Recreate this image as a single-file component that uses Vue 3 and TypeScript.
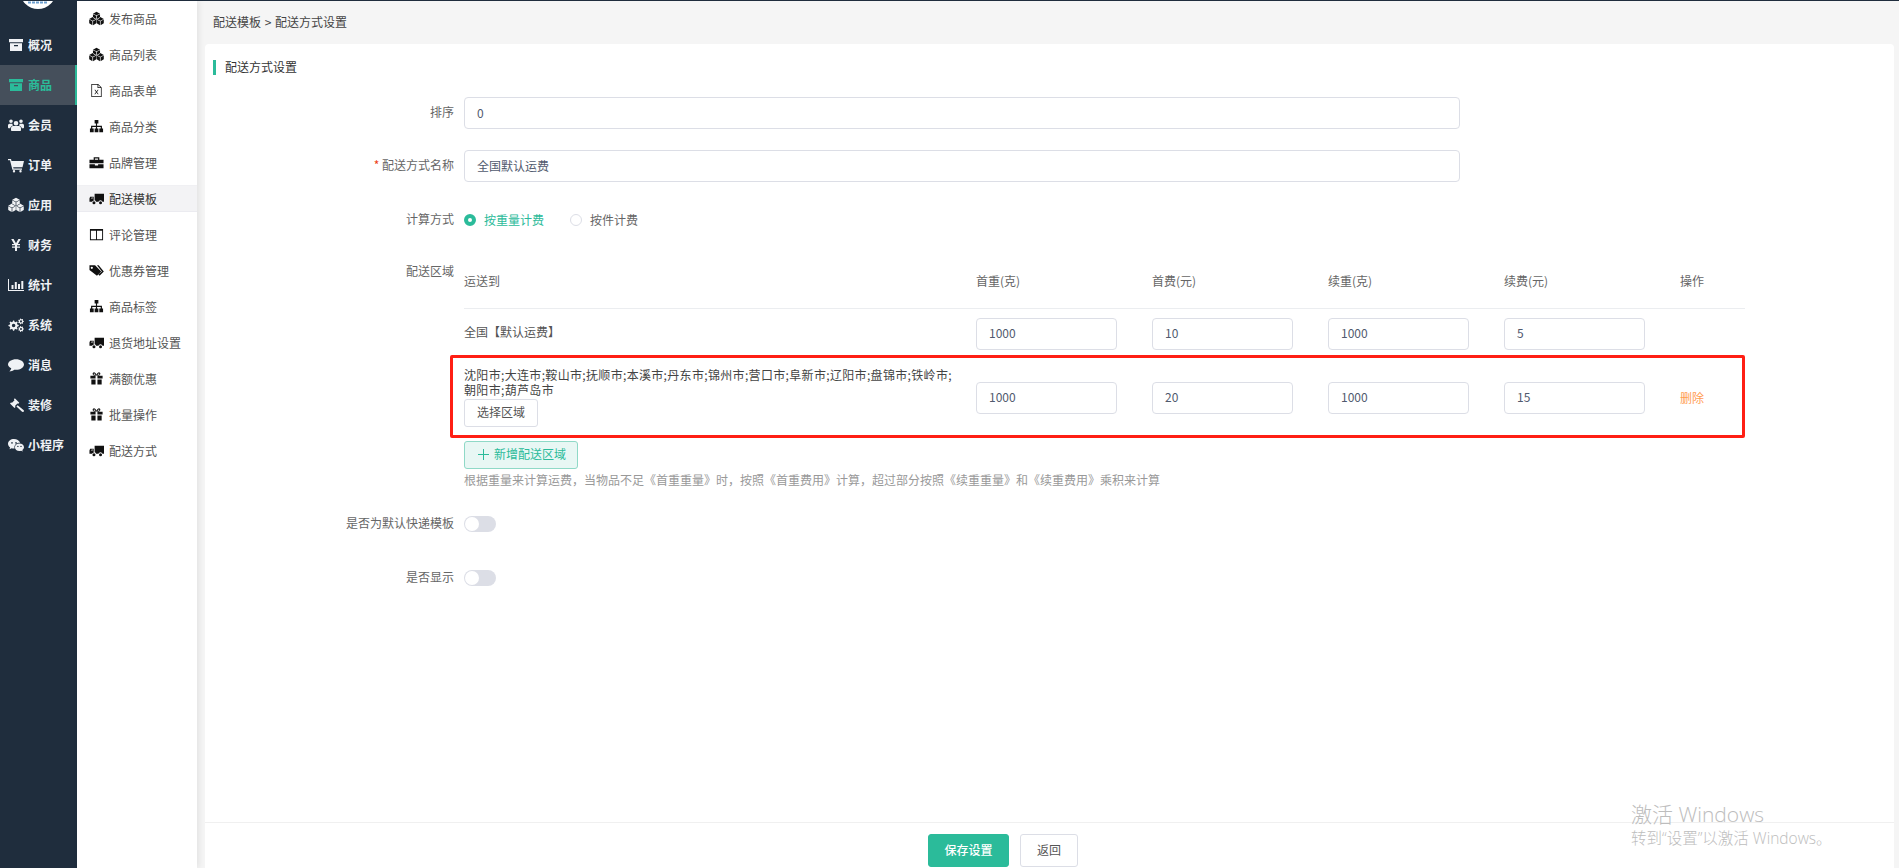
<script setup lang="ts">
function n(v: number): string {
  return (Math.round(v * 100) / 100).toString()
}
function cube(cx: number, cy: number, r: number): string {
  const w = r * 0.88
  const h = r * 0.5
  const g = 0.35
  const top = `M${n(cx)} ${n(cy - r)}L${n(cx + w)} ${n(cy - h)}L${n(cx)} ${n(cy - g)}L${n(cx - w)} ${n(cy - h)}Z`
  const left = `M${n(cx - w)} ${n(cy - h + g * 1.4)}L${n(cx - g)} ${n(cy + g / 2)}L${n(cx - g)} ${n(cy + r)}L${n(cx - w)} ${n(cy + h)}Z`
  const right = `M${n(cx + w)} ${n(cy - h + g * 1.4)}L${n(cx + g)} ${n(cy + g / 2)}L${n(cx + g)} ${n(cy + r)}L${n(cx + w)} ${n(cy + h)}Z`
  return top + left + right
}
function gear(cx: number, cy: number, r: number, teeth: number): string {
  const pts: string[] = []
  const steps = teeth * 4
  for (let i = 0; i < steps; i++) {
    const a = ((i - 0.5) / steps) * Math.PI * 2
    const rad = i % 4 < 2 ? r : r * 0.74
    pts.push(`${n(cx + Math.cos(a) * rad)} ${n(cy + Math.sin(a) * rad)}`)
  }
  const hole = r * 0.34
  return `M${pts.join('L')}ZM${n(cx - hole)} ${n(cy)}a${n(hole)} ${n(hole)} 0 1 0 ${n(hole * 2)} 0a${n(hole)} ${n(hole)} 0 1 0 ${n(-hole * 2)} 0Z`
}

const icons: Record<string, string> = {
  archive: 'M1 2h14v3.200H1zM2 6.200h12V14H2zM6 8v1.200h4V8z',
  users:
    'M8 4a2.300 2.300 0 1 1 0 4.600A2.300 2.300 0 0 1 8 4zM3 2.500a1.800 1.800 0 1 1 0 3.600 1.800 1.800 0 0 1 0-3.600zM13 2.500a1.800 1.800 0 1 1 0 3.600 1.800 1.800 0 0 1 0-3.600zM5 9h6c1.200 0 2 1 2 2.500V13c0 .6-.5 1-1 1H4c-.5 0-1-.4-1-1v-1.500C3 10 3.800 9 5 9zM1.500 6.800H4.300c.1.700.4 1.300.8 1.600-1.500.3-2.700 1.300-2.900 2.900H1c-.6 0-1-.4-1-1V8.500c0-1 .7-1.700 1.500-1.700zM11.700 6.800h2.800c.8 0 1.500.7 1.500 1.700V10.300c0 .6-.4 1-1 1h-1.200c-.2-1.600-1.400-2.600-2.900-2.900.4-.3.700-.9.800-1.600z',
  cart:
    'M0 2h3l.5 2H16l-1.500 6.200H5.200l.3 1.300H14v1.300H4.400L2 3.300H0zM6 13a1.200 1.200 0 1 1 0 2.400A1.200 1.200 0 0 1 6 13zM12.500 13a1.200 1.200 0 1 1 0 2.400 1.200 1.200 0 0 1 0-2.400z',
  cubes: cube(8, 5, 4.3) + cube(4, 10.8, 4.3) + cube(12, 10.8, 4.3),
  yen: 'M3.200 2h2.400L8 6.300 10.400 2h2.400L9.900 7H12v1.300H9V9.500h3v1.300H9V14H7v-3.200H4V9.500h3V8.300H4V7h2.100z',
  chart: 'M0 2h1v11h15v1H0zM3.500 8h2v4h-2zM6.800 5h2v7h-2zM10 7h2v5h-2zM13.300 4h2v8h-2z',
  cogs: gear(5.6, 8.6, 5.2, 8) + gear(13, 4.4, 2.9, 7) + gear(13, 12, 2.9, 7),
  comment:
    'M8 2.200c4.400 0 8 2.400 8 5.300s-3.600 5.300-8 5.300c-.6 0-1.200 0-1.800-.1C5 13.700 3.200 14.300 1.400 14.400c.9-1 1.600-2 1.900-3.200C1.300 10.300 0 9 0 7.500 0 4.600 3.600 2.200 8 2.200z',
  gavel:
    'M6.800 1.200l4.500 4.500-1 1-.9-.2L7 8.900l.5 1-1 1L2 6.400l1-1 1 .4 2.500-2.500-.6-.8zM8.400 9.500l1.200-1.200 5.900 4.600c.6.500.6 1.300.1 1.800s-1.300.5-1.800-.1z',
  wechat:
    'M6 2C2.700 2 0 4.100 0 6.800c0 1.500.8 2.800 2.100 3.700l-.6 1.800 2.100-1.100c.8.200 1.500.3 2.400.3h.6c-.1-.4-.2-.8-.2-1.200 0-2.500 2.400-4.500 5.300-4.500h.5C11.200 3.500 8.800 2 6 2zM4 5.100a.8.800 0 1 1 0 1.600.8.800 0 0 1 0-1.600zM8 5.100a.8.800 0 1 1 0 1.600.8.800 0 0 1 0-1.600zM11.400 6.500C8.900 6.500 6.900 8.100 6.900 10.200s2 3.700 4.500 3.700c.6 0 1.100-.1 1.700-.2l1.700.9-.5-1.500c1-.7 1.700-1.800 1.700-2.900 0-2.100-2-3.700-4.600-3.700zM9.900 8.700a.7.700 0 1 1 0 1.400.7.700 0 0 1 0-1.400zM13 8.700a.7.700 0 1 1 0 1.400.7.700 0 0 1 0-1.400z',
  file:
    'M2.500 1h7.300l3.700 3.700V15h-11zM3.300 1.800v12.400h9.400V5.400H9.100V1.800zM9.900 2.200V4.600h2.400zM5.800 7.200h.9l1.300 1.800 1.300-1.800h.9L8.500 9.600l1.800 2.400h-.9L8 10.200 6.600 12h-.9l1.800-2.400z',
  sitemap:
    'M6 1h4v3.800H8.600v2.400h5.200V10H15v4h-4v-4h1.500V8.400H8.600V10H10v4H6v-4h1.400V8.400H3.500V10H5v4H1v-4h1.200V7.200h5.200V4.800H6z',
  briefcase:
    'M5 2.500h6V5h4.500v3.800h-15V5H5zM6.300 3.700V5h3.400V3.700zM.5 9.800h5.800v1.500h3.400V9.800h5.800V14H.5z',
  truck:
    'M6 3h10v8.500h-1.600a2.200 2.200 0 0 0-4.300 0H7.500a2.200 2.200 0 0 0-1.500-1.700zM1.200 6H5v4.500c-.8.100-1.500.5-1.800 1H.5V8zM2 7.900h2V6.900H3zM5.300 10.800a1.600 1.600 0 1 1 0 3.200 1.600 1.600 0 0 1 0-3.200zM12.300 10.800a1.600 1.600 0 1 1 0 3.200 1.600 1.600 0 0 1 0-3.200z',
  columns: 'M1 2h14v12H1zM2 4v9h5.500V4zM8.500 4v9H14V4z',
  tags:
    'M.5 2.500H6.500l6.500 6.500-4.500 4.500L.5 7.500zM3 3.900a1.200 1.200 0 1 0 0 2.400 1.200 1.200 0 0 0 0-2.400zM8.500 2.500h1.800l5.500 6.500-4.500 4.500-1.300-1.200L13.700 9z',
  gift:
    'M1.500 5H7v3H1.500zM9 5h5.500v3H9zM2.500 9H7v5.500H2.500zM9 9h4.500v5.500H9zM4.800 1.500c1.300-.4 2.500.8 3.200 2.600.7-1.800 1.900-3 3.200-2.600 1.500.5 1.100 2.800-.6 3.200H5.400C3.700 4.300 3.300 2 4.800 1.500zM5.200 2.800c-.5.200-.3 1 .3 1.200h1.400c-.5-.9-1.100-1.400-1.700-1.200zM10.800 2.800c-.6-.2-1.200.3-1.700 1.200h1.400c.6-.2.800-1 .3-1.200z',
}

const mainMenu = [
  { label: '概况', icon: 'archive' },
  { label: '商品', icon: 'archive', active: true },
  { label: '会员', icon: 'users' },
  { label: '订单', icon: 'cart' },
  { label: '应用', icon: 'cubes' },
  { label: '财务', icon: 'yen' },
  { label: '统计', icon: 'chart' },
  { label: '系统', icon: 'cogs' },
  { label: '消息', icon: 'comment' },
  { label: '装修', icon: 'gavel' },
  { label: '小程序', icon: 'wechat' },
]

const subMenu = [
  { label: '发布商品', icon: 'cubes' },
  { label: '商品列表', icon: 'cubes' },
  { label: '商品表单', icon: 'file' },
  { label: '商品分类', icon: 'sitemap' },
  { label: '品牌管理', icon: 'briefcase' },
  { label: '配送模板', icon: 'truck', active: true },
  { label: '评论管理', icon: 'columns' },
  { label: '优惠券管理', icon: 'tags' },
  { label: '商品标签', icon: 'sitemap' },
  { label: '退货地址设置', icon: 'truck' },
  { label: '满额优惠', icon: 'gift' },
  { label: '批量操作', icon: 'gift' },
  { label: '配送方式', icon: 'truck' },
]

const columns = ['首重(克)', '首费(元)', '续重(克)', '续费(元)']
const cities =
  '沈阳市;大连市;鞍山市;抚顺市;本溪市;丹东市;锦州市;营口市;阜新市;辽阳市;盘锦市;铁岭市;朝阳市;葫芦岛市'
</script>

<template>
  <div class="page">
    <div class="topline"></div>
    <div class="shell">
      <aside class="side">
        <svg class="logo" viewBox="0 0 36 36">
          <circle cx="18" cy="18" r="18" fill="#fff" />
          <path d="M8 29.500h20" stroke="#6d9fd0" stroke-width="2" stroke-dasharray="3 1" />
        </svg>
        <div
          v-for="item in mainMenu"
          :key="item.label"
          class="side-item"
          :class="{ on: item.active }"
        >
          <span class="side-ic"><svg viewBox="0 0 16 16"><path :d="icons[item.icon]" fill-rule="evenodd" /></svg></span>
          <span class="side-txt">{{ item.label }}</span>
        </div>
      </aside>

      <nav class="sub">
        <div v-for="item in subMenu" :key="item.label" class="sub-item" :class="{ on: item.active }">
          <svg viewBox="0 0 16 16"><path :d="icons[item.icon]" fill-rule="evenodd" /></svg>
          <span>{{ item.label }}</span>
        </div>
      </nav>

      <main class="main">
        <div class="crumb">配送模板 &gt; 配送方式设置</div>
        <section class="card">
          <div class="body">
            <h2 class="title">配送方式设置</h2>

            <div class="row first">
              <label class="lab">排序</label>
              <div class="ctl"><input class="inp wide" value="0" /></div>
            </div>
            <div class="row r2">
              <label class="lab"><i>*</i> 配送方式名称</label>
              <div class="ctl"><input class="inp wide" value="全国默认运费" /></div>
            </div>
            <div class="row r3">
              <label class="lab">计算方式</label>
              <div class="ctl radios">
                <span class="radio sel"><b></b><em>按重量计费</em></span>
                <span class="radio"><b></b><em>按件计费</em></span>
              </div>
            </div>
            <div class="row r4">
              <label class="lab">配送区域</label>
              <div class="ctl area">
                <div class="table-wrap">
                  <table class="tbl">
                    <colgroup>
                      <col class="c-a" />
                      <col v-for="c in columns" :key="c" class="c-n" />
                      <col class="c-o" />
                    </colgroup>
                    <thead>
                      <tr>
                        <th>运送到</th>
                        <th v-for="c in columns" :key="c">{{ c }}</th>
                        <th>操作</th>
                      </tr>
                    </thead>
                    <tbody>
                      <tr>
                        <td class="lift">全国【默认运费】</td>
                        <td><input class="inp" value="1000" /></td>
                        <td><input class="inp" value="10" /></td>
                        <td><input class="inp" value="1000" /></td>
                        <td><input class="inp" value="5" /></td>
                        <td></td>
                      </tr>
                      <tr>
                        <td>
                          <div class="cities">{{ cities }}</div>
                          <button class="btn pick">选择区域</button>
                        </td>
                        <td><input class="inp" value="1000" /></td>
                        <td><input class="inp" value="20" /></td>
                        <td><input class="inp" value="1000" /></td>
                        <td><input class="inp" value="15" /></td>
                        <td class="del">删除</td>
                      </tr>
                    </tbody>
                  </table>
                  <div class="redbox"></div>
                </div>
                <button class="btn add">
                  <svg class="plus" viewBox="0 0 11 11"><path d="M5.500 0v11M0 5.500h11" stroke="#2bbb9a" /></svg>
                  <span>新增配送区域</span>
                </button>
                <p class="tip">根据重量来计算运费，当物品不足《首重重量》时，按照《首重费用》计算，超过部分按照《续重重量》和《续重费用》乘积来计算</p>
              </div>
            </div>
            <div class="row r5">
              <label class="lab">是否为默认快递模板</label>
              <div class="ctl"><span class="switch"></span></div>
            </div>
            <div class="row r6">
              <label class="lab">是否显示</label>
              <div class="ctl"><span class="switch"></span></div>
            </div>
          </div>
          <footer class="foot">
            <button class="btn save">保存设置</button>
            <button class="btn back">返回</button>
          </footer>
        </section>
      </main>
    </div>
    <div class="watermark">
      <div class="wm1">激活 Windows</div>
      <div class="wm2">转到“设置”以激活 Windows。</div>
    </div>
  </div>
</template>

<style>
html,
body {
  margin: 0;
  overflow: hidden;
}
</style>

<style scoped>
.page {
  position: relative;
  width: 1899px;
  height: 868px;
  overflow: hidden;
  display: flex;
  flex-direction: column;
  background: #f5f5f5;
  font-family: "Noto Sans CJK SC", "Noto Sans", sans-serif;
  font-size: 12px;
  color: #555;
}
.topline {
  height: 1px;
  flex: none;
  background: #1f2d3d;
}
.shell {
  flex: 1;
  min-height: 0;
  display: flex;
}
.side {
  width: 77px;
  flex: none;
  background: #1f2d3d;
  overflow: hidden;
}
.logo {
  display: block;
  width: 36px;
  height: 36px;
  margin: -28px 0 16px 20px;
}
.side-item {
  height: 40px;
  display: flex;
  align-items: center;
  padding-left: 8px;
  gap: 4px;
  color: #f0f2f5;
  font-weight: 700;
  box-sizing: border-box;
}
.side-item.on {
  background: #454f5b;
  color: #2bbb9a;
  border-right: 2px solid #2bbb9a;
}
.side-txt {
  margin-bottom: 2px;
}
.side-ic {
  width: 16px;
  display: flex;
  justify-content: center;
}
.side-ic svg {
  width: 16px;
  height: 16px;
  fill: currentColor;
}
.sub {
  width: 120px;
  flex: none;
  background: #fff;
  box-shadow: 2px 0 6px rgba(0, 0, 0, 0.08);
  padding-top: 4px;
  position: relative;
  z-index: 1;
}
.sub-item {
  height: 27px;
  margin-bottom: 9px;
  display: flex;
  align-items: center;
  padding-left: 12px;
  gap: 5px;
  color: #555;
}
.sub-item svg {
  width: 15px;
  height: 15px;
  fill: #111;
  flex: none;
}
.sub-item.on {
  background: #f3f3f5;
  border-bottom: 1px solid #ebebf0;
  border-top: 1px solid #f0f0f3;
  box-sizing: border-box;
  color: #333;
}
.main {
  flex: 1;
  min-width: 0;
  display: flex;
  flex-direction: column;
  padding: 0 5px 0 8px;
}
.crumb {
  height: 43px;
  flex: none;
  line-height: 41px;
  padding-left: 8px;
  color: #444;
  word-spacing: 1px;
}
.card {
  flex: 1;
  min-height: 0;
  background: #fff;
  border-radius: 4px 4px 0 0;
  display: flex;
  flex-direction: column;
}
.body {
  flex: 1;
  min-height: 0;
}
.title {
  margin: 16px 0 0 8px;
  height: 15px;
  line-height: 13px;
  font-size: 12px;
  font-weight: 400;
  color: #333;
  border-left: 3px solid #2bbb9a;
  padding-left: 9px;
}
.row {
  display: flex;
}
.row.first {
  margin-top: 22px;
}
.row.r2 {
  margin-top: 21px;
}
.row.r3 {
  margin-top: 22px;
}
.row.r4 {
  margin-top: 20px;
}
.row.r5 {
  margin-top: 18px;
}
.row.r6 {
  margin-top: 22px;
}
.lab {
  width: 249px;
  flex: none;
  height: 32px;
  line-height: 30px;
  text-align: right;
  margin-right: 10px;
  color: #666;
}
.lab i {
  color: #ed4014;
  font-style: normal;
}
.ctl {
  min-height: 32px;
  display: flex;
  align-items: center;
}
.inp {
  width: 141px;
  height: 32px;
  box-sizing: border-box;
  border: 1px solid #dcdee6;
  border-radius: 4px;
  padding: 0 12px 2px;
  font: inherit;
  color: #515a6e;
  background: #fff;
  outline: none;
  display: block;
}
.inp.wide {
  width: 996px;
}
.radios {
  gap: 26px;
}
.radio {
  display: inline-flex;
  align-items: center;
  gap: 8px;
  width: 80px;
  color: #666;
}
.radio em {
  font-style: normal;
  margin-bottom: 2px;
}
.radio b {
  width: 12px;
  height: 12px;
  box-sizing: border-box;
  border: 1px solid #dcdee6;
  border-radius: 50%;
  background: #fff;
  flex: none;
}
.radio.sel {
  color: #2bbb9a;
}
.radio.sel b {
  border: 4px solid #2bbb9a;
}
.area {
  display: block;
}
.table-wrap {
  position: relative;
  width: 1281px;
}
.tbl {
  width: 1281px;
  table-layout: fixed;
  border-collapse: collapse;
}
.c-a {
  width: 512px;
}
.c-n {
  width: 176px;
}
.c-o {
  width: 65px;
}
.tbl th {
  height: 52px;
  padding: 0 0 2px;
  box-sizing: border-box;
  text-align: left;
  font-weight: 400;
  color: #666;
  border-bottom: 1px solid #ebedf0;
}
.tbl td {
  padding: 9px 0;
  color: #555;
  vertical-align: middle;
}
.tbl td.lift {
  padding-bottom: 12px;
  padding-top: 8px;
}
.cities {
  line-height: 15px;
  width: 490px;
  color: #444;
  letter-spacing: 0.33px;
  margin-top: -1px;
  padding-bottom: 1px;
}
.btn {
  box-sizing: border-box;
  border: 1px solid #dcdee6;
  border-radius: 3px;
  background: #fff;
  font: inherit;
  color: #555;
  padding: 0 0 2px;
  height: 28px;
  display: block;
}
.pick {
  margin: 1px 0;
  width: 74px;
}
.del {
  color: #ff9c50 !important;
}
.redbox {
  position: absolute;
  left: -14px;
  top: 99px;
  width: 1295px;
  height: 83px;
  box-sizing: border-box;
  border: 3px solid #ff1f14;
  border-radius: 2px;
}
.add {
  margin-top: 4px;
  width: 114px;
  display: flex;
  align-items: center;
  gap: 5px;
  padding: 0 0 0 13px;
  background: #e8f7f4;
  border-color: #8fd9c7;
  color: #2bbb9a;
}
.add span {
  margin-bottom: 2px;
}
.plus {
  width: 11px;
  height: 11px;
  flex: none;
}
.tip {
  margin: 0;
  height: 21px;
  line-height: 21px;
  color: #999;
}
.switch {
  display: block;
  width: 32px;
  height: 16px;
  border-radius: 8px;
  background: #dcdee6;
  position: relative;
}
.switch::after {
  content: "";
  position: absolute;
  left: 1px;
  top: 1px;
  width: 14px;
  height: 14px;
  border-radius: 50%;
  background: #fff;
}
.foot {
  height: 46px;
  flex: none;
  box-sizing: border-box;
  border-top: 1px solid #f0f0f0;
  display: flex;
  gap: 11px;
  padding: 11px 0 0 723px;
}
.save {
  width: 81px;
  height: 33px;
  background: #2bbb9a;
  border-color: #2bbb9a;
  color: #fff;
  font-weight: 500;
}
.back {
  width: 58px;
  height: 33px;
}
.watermark {
  position: absolute;
  left: 1631px;
  top: 800px;
  color: #bdbdbd;
  pointer-events: none;
  font-family: "Open Sans", "Noto Sans CJK SC", sans-serif;
}
.wm1 {
  font-size: 21px;
  line-height: 28px;
  font-weight: 300;
}
.wm2 {
  font-size: 15.5px;
  line-height: 21px;
  font-weight: 300;
}
</style>
